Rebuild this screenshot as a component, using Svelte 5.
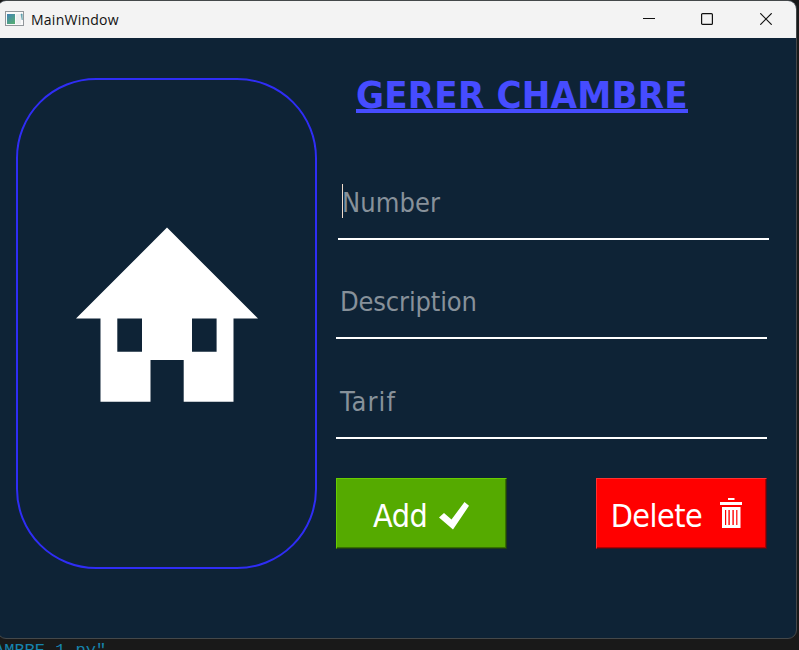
<script>
  const fields = [
    { name: 'Number', active: true, spacing: 0.1 },
    { name: 'Description', active: false, spacing: -0.15 },
    { name: 'Tarif', active: false, spacing: 1.1 }
  ];
</script>

<div class="desktop">
  <div class="window">
    <header>
      <svg class="app-icon" width="19" height="15" viewBox="0 0 19 15">
        <defs>
          <linearGradient id="pane" x1="0" y1="0" x2="0.6" y2="1">
            <stop offset="0" stop-color="#4283b5" />
            <stop offset="1" stop-color="#54aa78" />
          </linearGradient>
        </defs>
        <rect x="0.5" y="0.5" width="18" height="14" fill="#fafafa" stroke="#92979b" />
        <rect x="2" y="3" width="8" height="10" fill="url(#pane)" />
        <rect x="11" y="3" width="5" height="10" fill="#eceeef" />
        <path d="M16 3h1.2v6z" fill="url(#pane)" stroke="#5b9cac" stroke-width=".6" />
      </svg>
      <span class="caption">MainWindow</span>
      <div class="controls">
        <svg width="12" height="12" viewBox="0 0 12 12"><path d="M0 5.5h12" /></svg>
        <svg width="12" height="12" viewBox="0 0 12 12"><rect x=".6" y=".6" width="10.8" height="10.8" rx="1" /></svg>
        <svg width="12" height="12" viewBox="0 0 12 12"><path d="M.3.3l11.4 11.4M11.7.3L.3 11.7" /></svg>
      </div>
    </header>
    <main>
      <section class="panel">
        <svg width="182" height="175" viewBox="0 0 182 175">
          <path fill="#fff" fill-rule="evenodd" d="M91 .6L182 91.5H157.5V174.7H107.7V133H74.5V174.7H24.5V91.5H0ZM41.3 91.5V124.7H66V91.5ZM116 91.5V124.7H140.6V91.5Z" />
        </svg>
      </section>
      <section class="form">
        <h1><span>GERER CHAMBRE</span></h1>
        {#each fields as f}
          <div class="field" class:active={f.active}>
            <span style:letter-spacing="{f.spacing}px">{f.name}</span>
          </div>
        {/each}
        <div class="actions">
          <button class="add">
            <span>Add</span>
            <svg width="30" height="28" viewBox="0 0 30 28"><path fill="#fff" d="M0 15.5L5 11L12.5 17.5L25.5 0L30 3.8L14 27.5Z" /></svg>
          </button>
          <button class="delete">
            <span>Delete</span>
            <svg width="22" height="30" viewBox="0 0 22 30"><path fill="#fff" fill-rule="evenodd" d="M8 0H14.5V2H8ZM0 4H22V7H0ZM2 9H20.5V30H2ZM5 12V27H6.2V12ZM8.4 12V27H9.8V12ZM12.4 12V27H13.8V12ZM16.2 12V27H17.4V12Z" /></svg>
          </button>
        </div>
      </section>
    </main>
  </div>
  <div class="terminal">AMBRE_1.py"</div>
</div>

<style>
  :global(body) { margin: 0; overflow: hidden; background: #191919; }
  .desktop {
    width: 799px;
    height: 650px;
    overflow: hidden;
    background: #191919;
    font-family: "DejaVu Sans Condensed", "DejaVu Sans", sans-serif;
  }
  .window {
    box-sizing: border-box;
    width: 800px;
    height: 639px;
    margin-left: -3px;
    border: 1px solid #44484a;
    border-radius: 9px;
    overflow: hidden;
    background: #0e2336;
  }
  header {
    height: 37px;
    display: flex;
    align-items: center;
    background: #f3f3f3;
    padding-left: 7px;
    color: #111;
  }
  .app-icon { margin-top: -2px; }
  .caption {
    font-family: "Open Sans", sans-serif;
    font-size: 14px;
    margin-left: 7px;
    letter-spacing: 0.25px;
  }
  .controls {
    display: flex;
    gap: 46.5px;
    margin-left: auto;
    margin-right: 24px;
    fill: none;
    stroke: #111;
    stroke-width: 1.2;
  }
  .controls svg { display: block; margin-top: -1px; }
  .controls svg:nth-child(2) { margin-left: -0.5px; margin-right: 0.5px; }
  main { display: flex; padding: 40px 0 0 18px; }
  .panel {
    box-sizing: border-box;
    width: 301px;
    height: 491px;
    border: 2px solid #2f2df5;
    border-radius: 80px;
    display: flex;
    justify-content: center;
  }
  .panel svg { margin-top: 147px; }
  .form { width: 433px; margin-left: 19px; }
  h1 {
    margin: 0;
    padding-left: 20px;
    height: 89px;
    color: #464cff;
    font-size: 38px;
    line-height: 34px;
    font-weight: 700;
    white-space: nowrap;
  }
  h1 span {
    display: inline-block;
    width: 332px;
    height: 31px;
    border-bottom: 4px solid #464cff;
    letter-spacing: 0.2px;
  }
  .field {
    box-sizing: border-box;
    position: relative;
    width: 431px;
    height: 73px;
    margin-bottom: 27px;
    padding-left: 4px;
    border-bottom: 2px solid #fff;
    color: #87919a;
    font-size: 27px;
    line-height: 71px;
  }
  .field.active { margin-left: 2px; margin-bottom: 26px; }
  .field.active::before {
    content: "";
    position: absolute;
    left: 4px;
    top: 17px;
    width: 1px;
    height: 34px;
    background: #f1dccb;
  }
  .actions { display: flex; justify-content: space-between; width: 431px; padding-top: 12px; }
  button {
    box-sizing: border-box;
    width: 171px;
    height: 71px;
    padding: 0;
    display: flex;
    align-items: center;
    border: 1px solid;
    color: #fff;
    font: 32px "DejaVu Sans Condensed", "DejaVu Sans", sans-serif;
  }
  .add {
    background: #5a0;
    border-color: #6c0 #1d3e14 #1d3e14 #6c0;
    box-shadow: inset -1px -1px #377000;
    padding-left: 36px;
  }
  .add span { width: 54px; }
  .add svg { margin-left: 12px; margin-top: 5px; }
  .delete {
    background: #f00;
    border-color: #ff3030 #4a101c #4a101c #ff3030;
    box-shadow: inset -1px -1px #b00000;
    padding-left: 13px;
  }
  .delete span { width: 93px; }
  .delete svg { margin-left: 17px; margin-top: -1px; }
  button span { line-height: 44px; margin-top: 4px; letter-spacing: -0.5px; }
  .terminal {
    margin-left: -6px;
    color: #1683ad;
    font: 17px/20px "Liberation Mono", monospace;
    padding-top: 2px;
    white-space: nowrap;
  }
</style>
